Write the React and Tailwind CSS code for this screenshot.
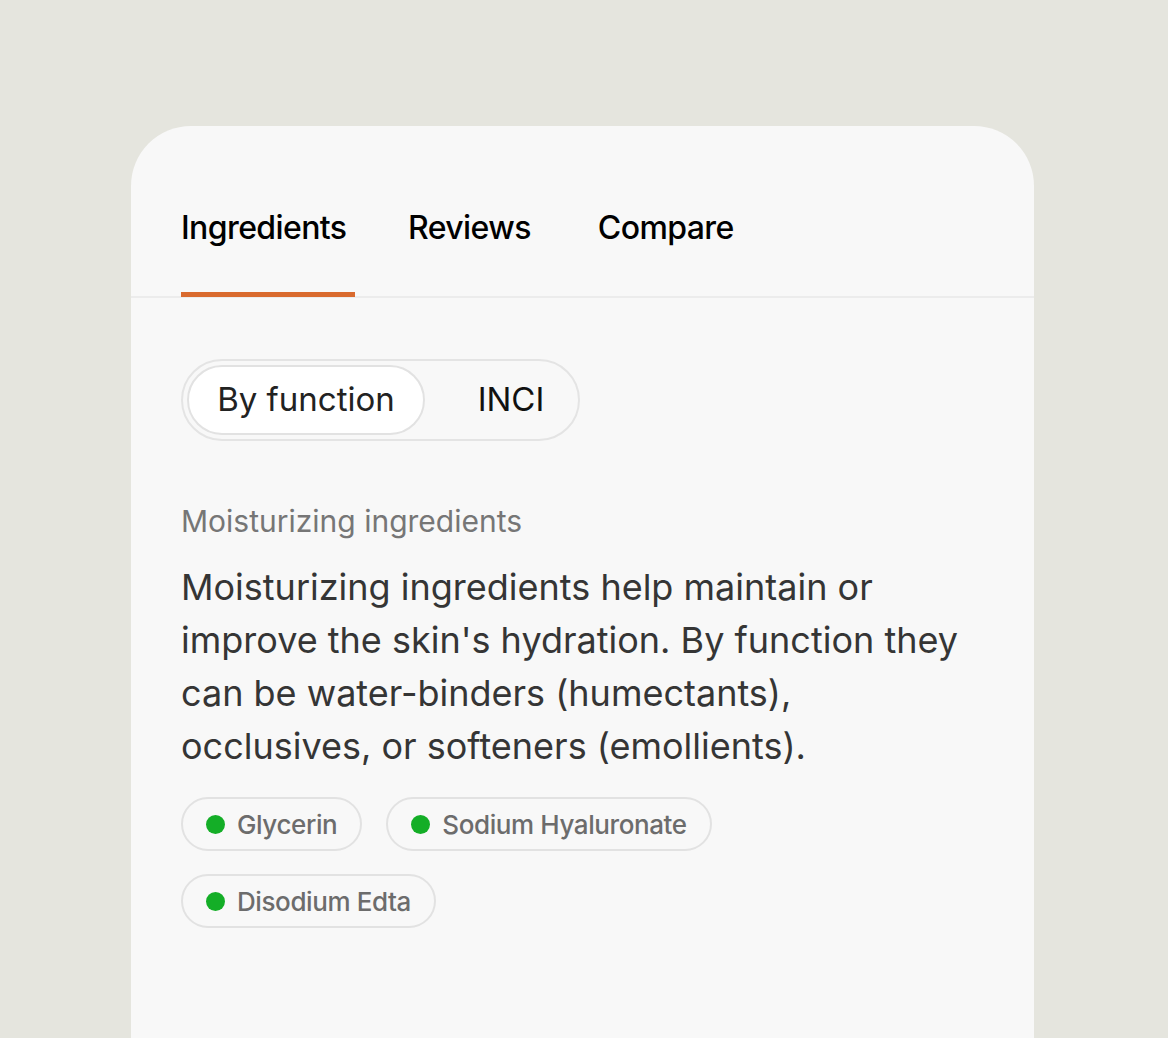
const chips = ['Glycerin', 'Sodium Hyaluronate', 'Disodium Edta']

const App = () => {
  return (
    <div className="min-h-screen w-full bg-[#e5e5de] pt-[126px] font-['Inter',sans-serif] overflow-hidden h-[1038px]">
      <div className="ml-[131px] w-[903px] min-h-[950px] rounded-t-[60px] bg-[#f8f8f8]">
        <div className="flex items-end gap-[53px] border-b-2 border-[#ececec] px-[50px] pt-[78px]">
          <button className="relative w-[174px] pb-[44px] text-left text-[32px] leading-[48px] font-medium tracking-[-0.6px] text-black">
            Ingredients
            <span className="absolute -bottom-[1px] left-0 h-[5px] w-[174px] bg-[#d96a2e]"></span>
          </button>
          <button className="pb-[44px] text-[32px] leading-[48px] font-medium tracking-[-0.6px] text-black">Reviews</button>
          <button className="ml-[14px] pb-[44px] text-[32px] leading-[48px] font-medium tracking-[-0.6px] text-black">Compare</button>
        </div>

        <div className="px-[50px] pt-[61px]">
          <div className="inline-flex h-[82px] items-center rounded-full border-2 border-[#e4e4e4] p-[4px]">
            <div className="flex h-[70px] w-[238px] items-center justify-center rounded-full border-2 border-[#e2e2e2] bg-white text-[33px] text-[#222222]">
              By function
            </div>
            <div className="flex h-[70px] w-[149px] items-center justify-center pl-[23px] text-[33px] text-[#111111]">INCI</div>
          </div>

          <p className="mt-[60px] text-[30px] leading-[40px] text-[#767676]">Moisturizing ingredients</p>
          <p className="mt-[20px] text-[36px] leading-[53px] font-normal text-[#353535]">
            Moisturizing ingredients help maintain or improve the skin's hydration. By function they can be water-binders (humectants), occlusives, or softeners (emollients).
          </p>

          <div className="mt-[24px] flex max-w-[600px] flex-wrap gap-x-[24px] gap-y-[23px]">
            {chips.map((c) => (
              <div key={c} className="flex h-[54px] items-center gap-[12px] rounded-full border-2 border-[#e2e2e2] pl-[23px] pr-[23px]">
                <span className="h-[19px] w-[19px] rounded-full bg-[#14ae27]"></span>
                <span className="text-[26px] font-medium tracking-[-0.4px] text-[#6c6c6c]">{c}</span>
              </div>
            ))}
          </div>
        </div>
      </div>
    </div>
  )
}

export default App
